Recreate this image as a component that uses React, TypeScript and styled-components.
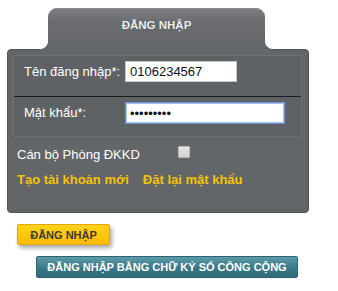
import React from 'react';
import styled, { createGlobalStyle } from 'styled-components';

const GlobalStyle = createGlobalStyle`
  body {
    margin: 0;
    background: #ffffff;
    font-family: 'Liberation Sans', Arial, sans-serif;
  }
`;

const Wrapper = styled.div`
  padding: 8px 0 0 7px;
  width: 302px;
`;

const Tab = styled.div`
  position: relative;
  z-index: 1;
  margin: 0 0 -1px 41px;
  width: 217px;
  height: 42px;
  border-radius: 9px 9px 0 0;
  background: linear-gradient(#7b7d80 0%, #6a6c6f 35%, #636669 100%);
  box-shadow: inset 0 1px 0 #8c8e91;
  display: flex;
  justify-content: center;
  padding-top: 11px;
  box-sizing: border-box;

  &::before,
  &::after {
    content: '';
    position: absolute;
    bottom: 0;
    width: 8px;
    height: 9px;
  }

  &::before {
    left: -8px;
    background: radial-gradient(circle at 0 0, transparent 7.5px, #636669 8.5px);
  }

  &::after {
    right: -8px;
    background: radial-gradient(circle at 100% 0, transparent 7.5px, #636669 8.5px);
  }
`;

const TabTitle = styled.span`
  font-size: 11.5px;
  font-weight: bold;
  color: #f0f0f0;
  text-shadow: 0 0 1px rgba(0, 0, 0, 0.4);
`;

const Panel = styled.div`
  background: #636669;
  border: 1px solid #505356;
  border-radius: 4px;
  padding: 5px 6px 23px 5px;
  height: 164px;
  box-sizing: border-box;
`;

const FieldBox = styled.div`
  border: 1px solid #6f7275;
  background: #5f6265;
  border-radius: 2px;
  height: 82px;
  box-sizing: border-box;
`;

const Row = styled.div<{ divided?: boolean; h: number }>`
  display: flex;
  align-items: center;
  height: ${(p) => p.h}px;
  padding: 5px 0 0 10px;
  box-sizing: border-box;
  border-bottom: ${(p) => (p.divided ? '1px solid #1c1c1c' : 'none')};
  align-items: flex-start;
`;

const Label = styled.label`
  width: 101px;
  font-size: 13px;
  line-height: 21px;
  color: #ffffff;
`;

const TextInput = styled.input<{ w: number; focused?: boolean }>`
  width: ${(p) => p.w}px;
  height: ${(p) => (p.focused ? 22 : 21)}px;
  box-sizing: border-box;
  border: 1px solid ${(p) => (p.focused ? '#6f93d6' : '#c8c8c8')};
  box-shadow: ${(p) => (p.focused ? '0 0 0 1px #a9bfe8 inset' : 'none')};
  background: #ffffff;
  font-family: 'Liberation Sans', Arial, sans-serif;
  font-size: 13px;
  color: #111;
  padding: 0 4px;
  outline: none;
  margin: 0;
`;

const CheckRow = styled.div`
  display: flex;
  align-items: flex-start;
  margin: 9px 0 0 4px;
  height: 18px;
`;

const PlainText = styled.span`
  font-size: 13px;
  line-height: 18px;
  color: #ffffff;
  width: 161px;
`;

const Check = styled.input`
  appearance: none;
  width: 12px;
  height: 12px;
  margin: 0;
  border: 1px solid #b9b9b9;
  background: linear-gradient(#e4e4e4, #d2d2d2);
  border-radius: 1px;
`;

const Links = styled.div`
  display: flex;
  gap: 14px;
  margin: 7px 0 0 4px;
`;

const Link = styled.a`
  font-size: 13px;
  line-height: 18px;
  font-weight: bold;
  color: #f4c30a;
  text-decoration: none;
  cursor: pointer;
`;

const Button = styled.button<{ variant: 'gold' | 'teal'; w: number; h: number; left: number }>`
  display: block;
  margin: 11px 0 0 ${(p) => p.left}px;
  width: ${(p) => p.w}px;
  height: ${(p) => p.h}px;
  padding: 0;
  border-radius: 2px;
  font-family: 'Liberation Sans', Arial, sans-serif;
  font-size: 11px;
  font-weight: bold;
  cursor: pointer;
  border: 1px solid ${(p) => (p.variant === 'gold' ? '#e6a800' : '#2d6472')};
  color: ${(p) => (p.variant === 'gold' ? '#3a3a3a' : '#ffffff')};
  background: ${(p) =>
    p.variant === 'gold'
      ? 'linear-gradient(#ffd31a, #ffbc00)'
      : 'linear-gradient(#5b9aa6, #3a7886 55%, #2f6b79)'};
  box-shadow: ${(p) =>
    p.variant === 'gold' ? '2px 3px 4px rgba(0, 0, 0, 0.35)' : 'none'};
`;

const App = () => {
  return (
    <>
      <GlobalStyle />
      <Wrapper>
        <Tab>
          <TabTitle>ĐĂNG NHẬP</TabTitle>
        </Tab>
        <Panel>
          <FieldBox>
            <Row divided h={41}>
              <Label>Tên đăng nhập*:</Label>
              <TextInput w={112} type="text" defaultValue="0106234567" />
            </Row>
            <Row h={39}>
              <Label>Mật khẩu*:</Label>
              <TextInput w={160} focused type="password" defaultValue="123456789" />
            </Row>
          </FieldBox>
          <CheckRow>
            <PlainText>Cán bộ Phòng ĐKKD</PlainText>
            <Check type="checkbox" />
          </CheckRow>
          <Links>
            <Link>Tạo tài khoản mới</Link>
            <Link>Đặt lại mật khẩu</Link>
          </Links>
        </Panel>
        <Button variant="gold" w={93} h={21} left={10}>
          ĐĂNG NHẬP
        </Button>
        <Button variant="teal" w={262} h={22} left={29}>
          ĐĂNG NHẬP BẰNG CHỮ KÝ SỐ CÔNG CỘNG
        </Button>
      </Wrapper>
    </>
  );
};

export default App;
